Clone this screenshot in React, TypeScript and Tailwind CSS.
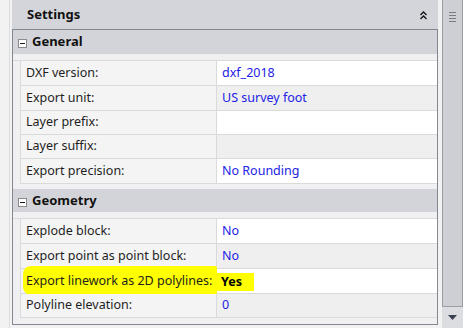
import React from 'react'

type Row = {
  label: string
  value: string
  highlight?: boolean
  short?: boolean
}

const general: Row[] = [
  { label: 'DXF version:', value: 'dxf_2018' },
  { label: 'Export unit:', value: 'US survey foot' },
  { label: 'Layer prefix:', value: '', short: true },
  { label: 'Layer suffix:', value: '', short: true },
  { label: 'Export precision:', value: 'No Rounding' },
]

const geometry: Row[] = [
  { label: 'Explode block:', value: 'No' },
  { label: 'Export point as point block:', value: 'No' },
  { label: 'Export linework as 2D polylines:', value: 'Yes', highlight: true },
  { label: 'Polyline elevation:', value: '0', short: true },
]

function MinusBox() {
  return (
    <div className="w-[9px] h-[9px] bg-white border border-[#8a8a8a] flex items-center justify-center">
      <div className="w-[5px] h-[1px] bg-[#1a1a1a]" />
    </div>
  )
}

function SectionHeader({ title, className }: { title: string; className?: string }) {
  return (
    <div className={'flex items-center bg-[#d3d4d9] pl-[5px] ' + (className ?? '')}>
      <div className="mt-[3px]">
        <MinusBox />
      </div>
      <span className="ml-[5px] text-[13px] font-bold text-[#111]">{title}</span>
    </div>
  )
}

function PropRow({ row, index }: { row: Row; index: number }) {
  const valueBg = index % 2 === 0 ? 'bg-white' : 'bg-[#efefef]'
  return (
    <div
      className={
        'grid grid-cols-[197px_1fr] border-b border-[#dadada] ' + (row.short ? 'h-[24px]' : 'h-[25px]')
      }
    >
      <div className="relative bg-[#f4f4f4] border-l border-r border-[#dadada] flex items-center pl-[5px]">
        {row.highlight && (
          <div className="absolute left-[2px] right-[-1px] top-[-3px] bottom-[-2px] bg-[#ffff00] rounded-l-[8px] rounded-r-[2px]" />
        )}
        <span className="relative text-[12.5px] text-[#1e1e1e] whitespace-nowrap">{row.label}</span>
      </div>
      <div className={valueBg + ' flex items-center'}>
        {row.highlight ? (
          <span className="bg-[#ffff00] h-[18px] mt-[2px] pl-[4px] pr-[12px] flex items-center text-[12.5px] font-bold text-black">
            {row.value}
          </span>
        ) : (
          <span className="pl-[5px] text-[12.5px] text-[#2222e6]">{row.value}</span>
        )}
      </div>
    </div>
  )
}

export default function App() {
  return (
    <div
      className="w-[463px] h-[328px] bg-[#f2f2f2] flex overflow-hidden"
      style={{ fontFamily: '"Noto Sans", "Open Sans", sans-serif' }}
    >
      {/* left strip */}
      <div className="w-[12px] flex shrink-0">
        <div className="w-[9px]" />
        <div className="w-[1px] bg-[#dcdcdc]" />
      </div>

      {/* main panel */}
      <div className="w-[426px] shrink-0 flex flex-col">
        <div className="h-[29px] bg-[#d4d5da] flex items-center justify-between pl-[15px] pr-[11px]">
          <span className="text-[13px] font-bold text-[#111]">Settings</span>
          <svg width="7" height="9" viewBox="0 0 7 9" className="mt-[1px]">
            <path d="M0.5 4 L3.5 1 L6.5 4" fill="none" stroke="#111" strokeWidth="1.3" />
            <path d="M0.5 8 L3.5 5 L6.5 8" fill="none" stroke="#111" strokeWidth="1.3" />
          </svg>
        </div>

        <div className="h-[296px] border border-[#828790] bg-[#f0f0f3] flex flex-col">
          <SectionHeader title="General" className="h-[24px]" />
          <div className="pl-[7px] mt-[6px] border-t border-[#dadada]">
            {general.map((r, i) => (
              <PropRow key={r.label} row={r} index={i} />
            ))}
          </div>
          <SectionHeader title="Geometry" className="h-[23px] mt-[5px]" />
          <div className="pl-[7px] mt-[6px] border-t border-[#dadada]">
            {geometry.map((r, i) => (
              <PropRow key={r.label} row={r} index={i} />
            ))}
          </div>
        </div>
      </div>

      {/* gap */}
      <div className="w-[4px] shrink-0" />

      {/* scrollbar */}
      <div className="w-[21px] shrink-0 flex flex-col">
        <div className="flex-1 bg-[#cecfd4] border-l border-r border-b border-[#9c9da2] flex justify-center pt-[12px]">
          <div className="flex flex-col gap-[2px]">
            <div className="w-[7px] h-[1px] bg-[#7a7b80]" />
            <div className="w-[7px] h-[1px] bg-[#7a7b80]" />
            <div className="w-[7px] h-[1px] bg-[#7a7b80]" />
            <div className="w-[7px] h-[1px] bg-[#7a7b80]" />
          </div>
        </div>
        <div className="h-[21px] bg-[#dcdde1] flex items-center justify-center">
          <svg width="9" height="5" viewBox="0 0 9 5">
            <path d="M0 0 L9 0 L4.5 5 Z" fill="#3b4052" />
          </svg>
        </div>
      </div>
    </div>
  )
}
